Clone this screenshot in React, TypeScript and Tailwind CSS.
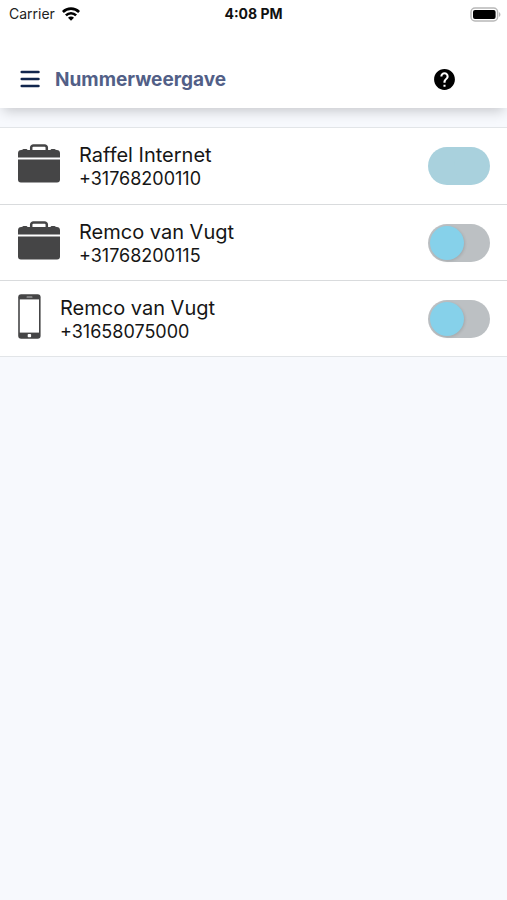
import React, { useState } from 'react';

type LineType = 'office' | 'mobile';

interface PhoneLine {
  id: string;
  type: LineType;
  name: string;
  number: string;
  enabled: boolean;
}

const initialLines: PhoneLine[] = [
  { id: 'raffel', type: 'office', name: 'Raffel Internet', number: '+31768200110', enabled: true },
  { id: 'remco-office', type: 'office', name: 'Remco van Vugt', number: '+31768200115', enabled: false },
  { id: 'remco-mobile', type: 'mobile', name: 'Remco van Vugt', number: '+31658075000', enabled: false },
];

const WifiIcon = () => (
  <svg className="w-[18px] h-[14px]" viewBox="0 0 18 14" fill="none" stroke="#000" strokeWidth="2.6" aria-hidden="true">
    <path d="M0.9 5a11.5 11.5 0 0 1 16.2 0" />
    <path d="M3.9 8.4a7.2 7.2 0 0 1 10.2 0" />
    <path d="M9 13.8 6 10.7a4.2 4.2 0 0 1 6 0z" fill="#000" stroke="none" />
  </svg>
);

const BatteryIcon = () => (
  <svg className="w-[31px] h-[15px]" viewBox="0 0 31 15" aria-hidden="true">
    <rect x="1" y="1" width="26.6" height="13" rx="4" fill="#fff" stroke="#b8b8b8" strokeWidth="1.5" />
    <rect x="3" y="3" width="22.6" height="9" rx="2" fill="#000" />
    <path d="M29 5.2c1.9.7 1.9 3.9 0 4.6z" fill="#b8b8b8" />
  </svg>
);

const MenuIcon = () => (
  <svg className="w-5 h-[18px]" viewBox="0 0 20 18" stroke="#10254d" strokeWidth="2.7" strokeLinecap="round" aria-hidden="true">
    <path d="M1.8 2h16.6M1.8 9h16.6M1.8 16h16.6" />
  </svg>
);

const HelpIcon = () => (
  <svg className="w-[25px] h-[25px]" viewBox="0 0 24 24" aria-hidden="true">
    <path
      fill="#000"
      d="M12 2C6.48 2 2 6.48 2 12s4.48 10 10 10 10-4.48 10-10S17.52 2 12 2zm1 17h-2v-2h2v2zm2.07-7.75-.9.92C13.45 12.9 13 13.5 13 15h-2v-.5c0-1.1.45-2.1 1.17-2.83l1.24-1.26c.37-.36.59-.86.59-1.41 0-1.1-.9-2-2-2s-2 .9-2 2H8c0-2.21 1.79-4 4-4s4 1.79 4 4c0 .88-.36 1.68-.93 2.25z"
    />
  </svg>
);

const BriefcaseIcon = () => (
  <svg className="w-[42px] h-[39px] mb-[5px]" viewBox="0 0 42 39" fill="#454546" aria-hidden="true">
    <path d="M13.2 6V3.6a2.2 2.2 0 0 1 2.2-2.2h11.2a2.2 2.2 0 0 1 2.2 2.2V6" fill="none" stroke="#454546" strokeWidth="2.5" />
    <path d="M0 13.6V9a3.2 3.2 0 0 1 3.2-3L4.4 5.8A1.4 1.4 0 0 1 5.6 5h2.6a1.4 1.4 0 0 1 1.3 1.1h23A1.4 1.4 0 0 1 33.8 5h2.600a1.4 1.4 0 0 1 1.2.8L38.8 6A3.2 3.2 0 0 1 42 9v4.6z" />
    <path d="M0 15.6h42v20a2.9 2.9 0 0 1-2.9 2.9H2.9A2.9 2.9 0 0 1 0 35.6z" />
  </svg>
);

const PhoneIcon = () => (
  <svg className="w-[23px] h-[45px] mb-[5px]" viewBox="0 0 23 45" aria-hidden="true">
    <rect x="0.2" y="0.3" width="22.4" height="44.4" rx="3" fill="#454546" />
    <rect x="1.8" y="5.4" width="19.2" height="33.2" fill="#fff" />
    <rect x="8.5" y="2.4" width="6" height="1.2" rx="0.6" fill="#bbb" />
    <rect x="9.7" y="39.9" width="3.4" height="3.4" rx="0.8" fill="#fff" />
  </svg>
);

interface ToggleProps {
  id: string;
  checked: boolean;
  onChange: () => void;
}

const Toggle: React.FC<ToggleProps> = ({ id, checked, onChange }) => (
  <input
    id={id}
    type="checkbox"
    role="switch"
    checked={checked}
    onChange={onChange}
    className="appearance-none shrink-0 flex items-center w-[62px] h-[38px] p-0.5 rounded-full cursor-pointer bg-[#bcc0c3] checked:bg-[#a9d1dd] checked:justify-end before:block before:size-[34px] before:rounded-full before:bg-[#86d1ea] before:shadow-[1px_1px_3px_rgba(0,0,0,0.12)] checked:before:bg-[#a9d1dd] checked:before:shadow-none"
  />
);

const StatusBar = () => (
  <div className="grid grid-cols-3 items-center h-7 px-1.5">
    <div className="flex items-center gap-[7px] pl-[3px] text-sm text-[#222]">
      Carrier
      <WifiIcon />
    </div>
    <div className="text-center text-sm font-bold text-[#111]">4:08 PM</div>
    <div className="flex justify-end">
      <BatteryIcon />
    </div>
  </div>
);

export default function App() {
  const [lines, setLines] = useState<PhoneLine[]>(initialLines);

  const toggleLine = (id: string) => {
    setLines(lines.map((line) => (line.id === id ? { ...line, enabled: !line.enabled } : line)));
  };

  return (
    <div className="min-h-screen bg-[#f7f9fd] font-['Inter','Liberation_Sans',sans-serif]">
      {/* Header */}
      <header className="bg-white shadow-[0_6px_12px_-3px_rgba(0,0,0,0.2)]">
        <StatusBar />
        <div className="flex items-center h-20 pt-[22px] pl-5 pr-[50px]">
          <button type="button" aria-label="Menu">
            <MenuIcon />
          </button>
          <h1 className="flex-1 ml-[15px] pt-0.5 text-[19px] font-bold text-[#525f87]">Nummerweergave</h1>
          <button type="button" aria-label="Help">
            <HelpIcon />
          </button>
        </div>
      </header>

      {/* Phone lines */}
      <ul className="mt-[19px] bg-white border-y border-[#e2e5e8]">
        {lines.map((line) => (
          <li key={line.id} className="flex items-center h-[76px] pl-[18px] pr-[17px] border-t border-[#d9dbdd] first:border-t-0">
            {line.type === 'office' ? <BriefcaseIcon /> : <PhoneIcon />}
            <label htmlFor={line.id} className="flex-1 ml-[19px] pt-0.5 text-[#161616]">
              <span className="block text-xl leading-[23px]">{line.name}</span>
              <span className="block text-lg leading-[23px]">{line.number}</span>
            </label>
            <Toggle id={line.id} checked={line.enabled} onChange={() => toggleLine(line.id)} />
          </li>
        ))}
      </ul>
    </div>
  );
}
